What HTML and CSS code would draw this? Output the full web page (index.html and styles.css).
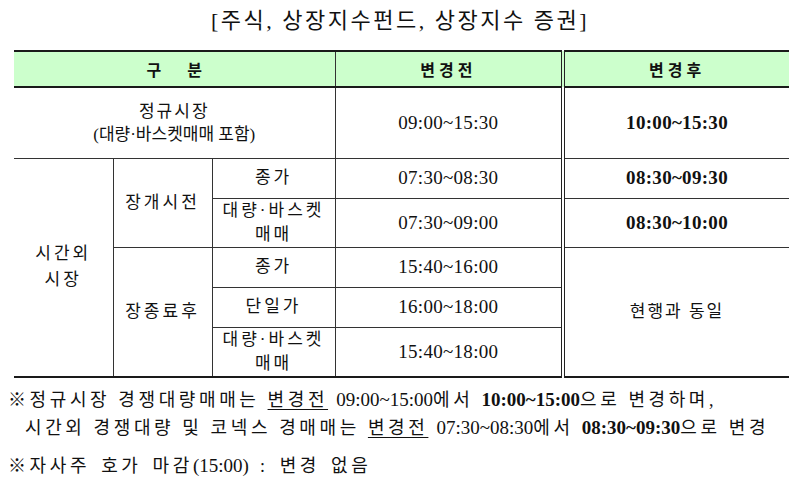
FILE: index.html
```html
<!DOCTYPE html>
<html lang="ko">
<head>
<meta charset="utf-8">
<title>시간 변경</title>
<link rel="stylesheet" href="styles.css">
</head>
<body>
<div class="title">[주식, 상장지수펀드, 상장지수 증권]</div>
<table class="grid">
  <colgroup>
    <col class="c1"><col class="c2"><col class="c3"><col class="c4"><col class="c5">
  </colgroup>
  <thead>
    <tr class="h">
      <th colspan="3" class="gubun">구 분</th>
      <th class="before head">변경전</th>
      <th class="head">변경후</th>
    </tr>
  </thead>
  <tbody>
    <tr class="r1">
      <td colspan="3" class="ko reg"><span class="reg1">정규시장</span><br><span class="reg2">(대량·바스켓매매 포함)</span></td>
      <td class="t before">09:00~15:30</td>
      <td class="t b">10:00~15:30</td>
    </tr>
    <tr class="r2">
      <td rowspan="5" class="ko tall">시간외<br>시장</td>
      <td rowspan="2" class="ko">장개시전</td>
      <td class="ko">종가</td>
      <td class="t before">07:30~08:30</td>
      <td class="t b">08:30~09:30</td>
    </tr>
    <tr class="r3">
      <td class="ko two">대량·바스켓<br>매매</td>
      <td class="t before">07:30~09:00</td>
      <td class="t b">08:30~10:00</td>
    </tr>
    <tr class="r2">
      <td rowspan="3" class="ko">장종료후</td>
      <td class="ko">종가</td>
      <td class="t before">15:40~16:00</td>
      <td rowspan="3" class="ko same">현행과 동일</td>
    </tr>
    <tr class="r2">
      <td class="ko">단일가</td>
      <td class="t before">16:00~18:00</td>
    </tr>
    <tr class="r3">
      <td class="ko two">대량·바스켓<br>매매</td>
      <td class="t before">15:40~18:00</td>
    </tr>
  </tbody>
</table>
<div class="notes">
  <p class="note">※정규시장 경쟁대량매매는 <u>변경전</u> <span class="num">09:00~15:00</span>에서 <b class="num">10:00~15:00</b>으로 변경하며,</p>
  <p class="note indent">시간외 경쟁대량 및 코넥스 경매매는 <u>변경전</u> <span class="num">07:30~08:30</span>에서 <b class="num">08:30~09:30</b>으로 변경</p>
  <p class="note last">※자사주 호가 마감<span class="num">(15:00)</span> : 변경 없음</p>
</div>
</body>
</html>
```
FILE: styles.css
```css
* { box-sizing: border-box; }

body {
  margin: 0;
  background: #ffffff;
  color: #111111;
  font-family: "Liberation Serif", "Noto Sans CJK KR", serif;
}

.title {
  height: 50px;
  padding-top: 8px;
  text-align: center;
  font-size: 22px;
  line-height: 26px;
  letter-spacing: 2.5px;
}

.grid {
  border-collapse: collapse;
  table-layout: fixed;
  width: 775px;
  margin-left: 14px;
  border-top: 2px solid #1a1a1a;
  border-bottom: 2px solid #1a1a1a;
  border-left: hidden;
  border-right: hidden;
}

.c1 { width: 99px; }
.c2 { width: 99px; }
.c3 { width: 123px; }
.c4 { width: 228px; }
.c5 { width: 226px; }

.grid th,
.grid td {
  padding: 0;
  text-align: center;
  vertical-align: middle;
  border: 1px solid #333333;
}

.h { height: 36px; }
.r1 { height: 71px; }
.r2 { height: 40px; }
.r3 { height: 49px; }

.grid th {
  background: #ccffcc;
  border-bottom: 2px solid #1a1a1a;
  font-weight: 700;
  font-size: 16px;
}

.gubun { word-spacing: 22px; }
.head { letter-spacing: 4px; padding-left: 4px; }

.grid .before { border-right: 4px double #222222; }

.ko {
  font-size: 17px;
  letter-spacing: 3px;
  line-height: 24px;
  padding-left: 3px;
}

.reg { line-height: 23px; padding-left: 0; }
.reg1 { letter-spacing: 2px; }
.reg2 { letter-spacing: 0; }
.tall { line-height: 26px; }
.same { letter-spacing: 2px; }

.t {
  font-size: 19px;
  letter-spacing: 0.3px;
}

.b { font-weight: 700; }

.notes {
  padding: 8px 0 0 8px;
}

.note {
  margin: 0;
  font-size: 18px;
  line-height: 27px;
  letter-spacing: 3.6px;
  white-space: nowrap;
}

.note u {
  text-decoration-thickness: 1px;
  text-underline-offset: 3px;
}

.note .num {
  font-size: 19px;
  letter-spacing: 0;
}

.indent { padding-left: 17px; }
.last { margin-top: 10px; word-spacing: 3px; }
```
